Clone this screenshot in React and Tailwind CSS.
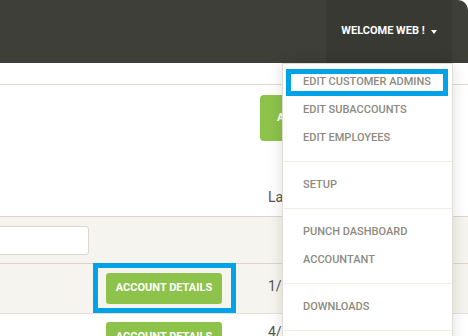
import React from "react";

const menuGroups = [
  ["EDIT CUSTOMER ADMINS", "EDIT SUBACCOUNTS", "EDIT EMPLOYEES"],
  ["SETUP"],
  ["PUNCH DASHBOARD", "ACCOUNTANT"],
  ["DOWNLOADS"],
];

export default function App() {
  return (
    <div
      className="relative w-[468px] h-[336px] overflow-hidden bg-white"
      style={{ fontFamily: "Roboto, 'Liberation Sans', sans-serif" }}
    >
      {/* header */}
      <div className="h-[63px] bg-[#3f3f3a] rounded-tr-[10px] flex justify-end">
        <div className="w-[126px] mr-[16px] bg-[#393934] flex items-center justify-center gap-[6px]">
          <span className="text-white text-[11px] font-bold">WELCOME WEB !</span>
          <span className="w-0 h-0 border-l-[3.5px] border-r-[3.5px] border-t-[4px] border-l-transparent border-r-transparent border-t-white"></span>
        </div>
      </div>

      {/* content */}
      <div className="h-[21px]"></div>
      <div className="h-px bg-[#e2dccd]"></div>
      <div className="h-[131px] relative">
        <div className="flex pl-[260px] pt-[10px]">
          <div className="h-[46px] w-[120px] bg-[#8dc34b] rounded-[4px] flex items-center pl-[17px] text-white text-[11px] font-bold">
            ADD NEW
          </div>
        </div>
        <div className="flex pl-[268px] pt-[48px] text-[14px] text-[#555] leading-[16px]">Last Login</div>
      </div>
      <div className="h-px bg-[#ddd6c6]"></div>
      <div className="h-[46px] bg-[#f6f4ef] flex items-center">
        <div className="w-[93px] h-[29px] bg-white border border-[#ddd7ca] rounded-[3px] -ml-[4px] box-border"></div>
      </div>
      <div className="h-px bg-[#ddd6c6]"></div>
      <div className="h-[49px] bg-[#f6f4ef] flex">
        <div className="w-[93px]"></div>
        <div className="w-[143px] h-[50px] -mt-px border-[5px] border-[#00a3e8] pl-[8px] pt-[5px]">
          <div className="w-[116px] h-[31px] bg-[#8dc34b] rounded-[3px] flex items-center justify-center text-white text-[11px] font-bold">
            ACCOUNT DETAILS
          </div>
        </div>
        <div className="pl-[32px] pt-[14px] text-[14px] text-[#555] leading-[16px]">1/12/2020</div>
      </div>
      <div className="h-px bg-[#e4e0d6]"></div>
      <div className="flex">
        <div className="w-[106px]"></div>
        <div className="pt-[8px] w-[130px]">
          <div className="w-[116px] h-[31px] bg-[#8dc34b] rounded-[3px] flex items-center justify-center text-white text-[11px] font-bold">
            ACCOUNT DETAILS
          </div>
        </div>
        <div className="pl-[32px] pt-[10px] text-[14px] text-[#555] leading-[16px]">4/03/2020</div>
      </div>

      {/* dropdown overlay */}
      <div className="absolute left-[282px] top-[63px] w-[171px] h-[290px] bg-white border border-[#e0ddd5] shadow-[0_0_14px_rgba(0,0,0,0.13)] pt-[5px] pl-px">
        {menuGroups.map((group, gi) => (
          <div key={gi}>
            {group.map((item, ii) =>
              gi === 0 && ii === 0 ? (
                <div
                  key={item}
                  className="ml-[2px] w-[162px] h-[27px] border-[5px] border-[#00a3e8] flex items-center pl-[12px] text-[11px] font-medium text-[#8d8a80]"
                >
                  {item}
                </div>
              ) : (
                <div
                  key={item}
                  className="h-[28px] flex items-center pl-[19px] text-[11px] font-medium text-[#8d8a80]"
                >
                  {item}
                </div>
              )
            )}
            <div className="h-px bg-[#f0ede7] my-[9px]"></div>
          </div>
        ))}
      </div>
    </div>
  );
}
